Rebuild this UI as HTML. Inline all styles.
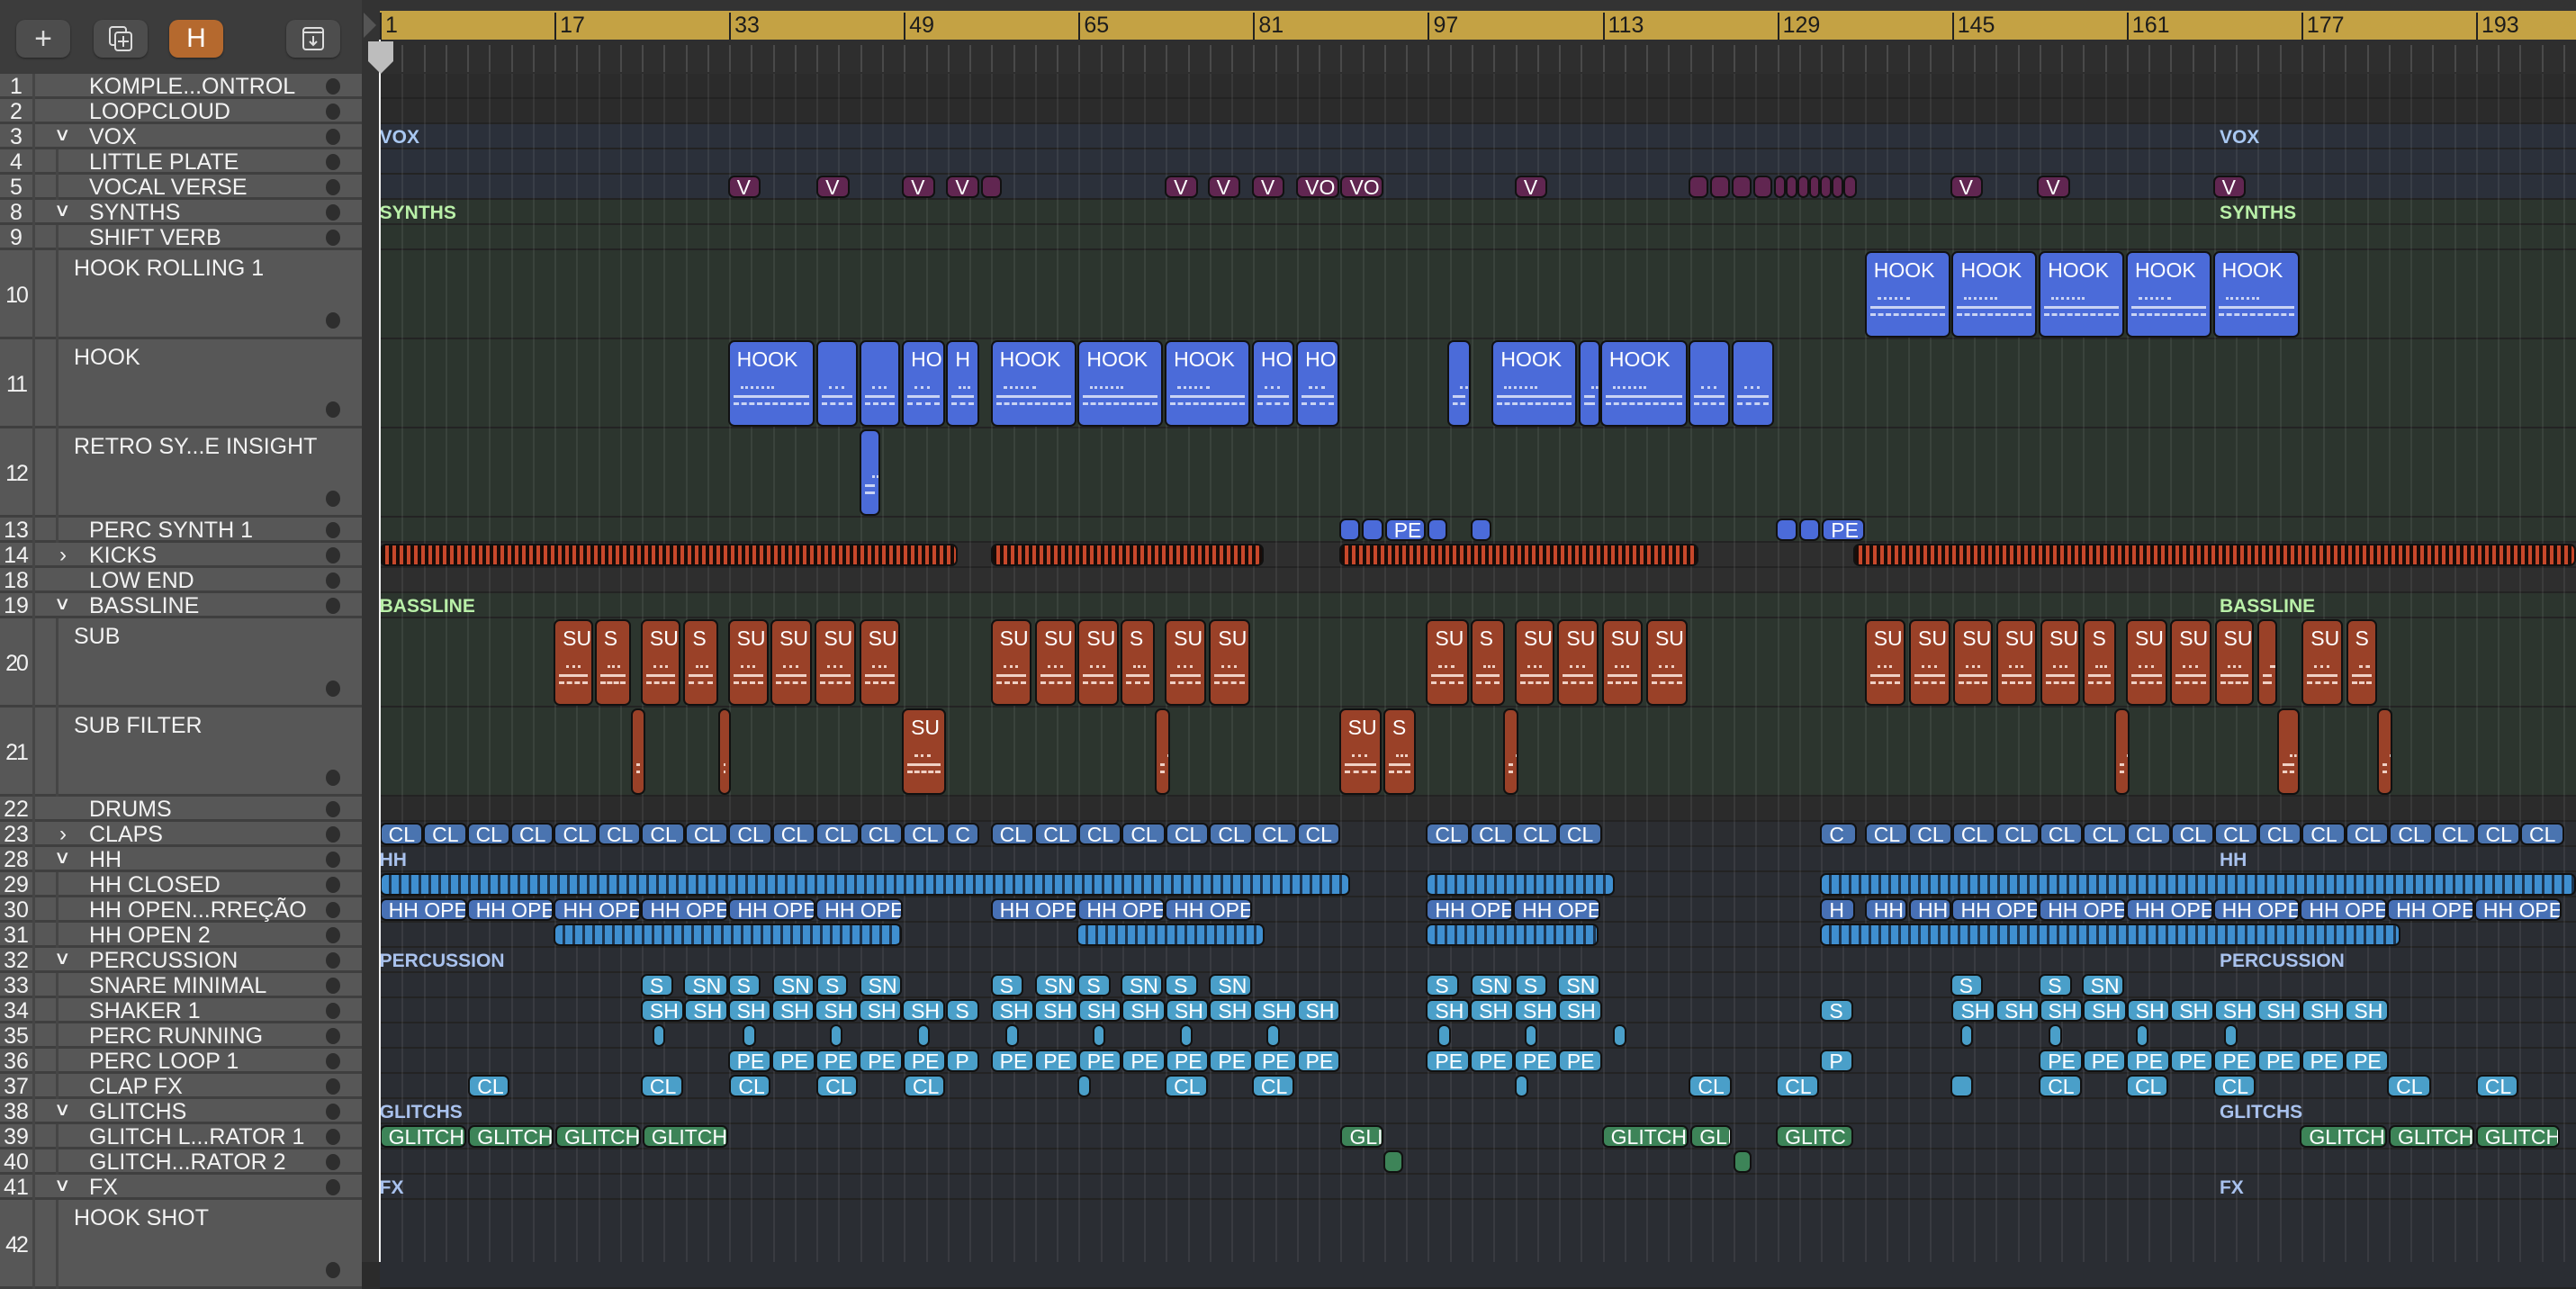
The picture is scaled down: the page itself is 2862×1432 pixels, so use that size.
<!DOCTYPE html>
<html><head><meta charset="utf-8">
<style>
*{margin:0;padding:0;box-sizing:border-box}
body{width:2862px;height:1402px;overflow:hidden;background:#2b2b2b;font-family:"Liberation Sans","DejaVu Sans",sans-serif;position:relative}
.a{position:absolute}
.btn{position:absolute;top:22px;width:60px;height:42px;background:#4d4d4d;border-radius:10px;box-shadow:0 1px 2px #222;color:#ddd;font-size:34px;text-align:center;line-height:42px}
.r{position:absolute;border:2px solid #111;border-radius:7px;color:#fff;font-size:23px;overflow:hidden;white-space:nowrap;padding-left:8px}
.nm{position:absolute;color:#f2f2f2;font-size:25px;white-space:nowrap}
.num{position:absolute;left:0;width:36px;color:#f2f2f2;font-size:25px;text-align:center}
.dot{position:absolute;left:362px;width:16px;height:18px;border-radius:50%;background:#2e2e2e}
.gl{position:absolute;font-size:21px;font-weight:bold}
</style></head><body>
<div class="a" style="left:0;top:0;width:402px;height:82px;background:#3c3c3c"></div>
<div class="btn" style="left:18px">+</div>
<div class="btn" style="left:104px"><svg width="34" height="34" viewBox="0 0 34 34" style="margin-top:4px"><rect x="5" y="4" width="18" height="20" rx="3" fill="none" stroke="#ddd" stroke-width="2"/><rect x="11" y="10" width="18" height="20" rx="3" fill="#4d4d4d" stroke="#ddd" stroke-width="2"/><path d="M20 14v12M14 20h12" stroke="#ddd" stroke-width="2"/></svg></div>
<div class="btn" style="left:188px;background:#b5692e;color:#fff;font-size:30px">H</div>
<div class="btn" style="left:318px"><svg width="34" height="34" viewBox="0 0 34 34" style="margin-top:4px"><rect x="6" y="5" width="22" height="24" rx="3" fill="none" stroke="#ddd" stroke-width="2"/><path d="M6 10h22M17 14v10M13 20l4 4 4-4" stroke="#ddd" stroke-width="2" fill="none"/></svg></div>
<div class="a" style="left:402px;top:0;width:20px;height:1402px;background:#333"></div>
<div class="a" style="left:402px;top:0;width:2460px;height:12px;background:#333"></div>
<div class="a" style="left:422px;top:12px;width:2440px;height:32px;background:#c4a244"></div>
<div class="a" style="left:422px;top:44px;width:2440px;height:38px;background:#2e2e2e"></div>
<div class="a" style="left:404px;top:14px;width:0;height:0;border-top:14px solid transparent;border-bottom:14px solid transparent;border-left:14px solid #555"></div>
<div id="root"></div>
<script>
(function(){
const S=1.8253,root=document.getElementById('root');
function el(h){root.insertAdjacentHTML('beforeend',h)}
const BX=b=>422+(b-1)*12.13;
for(let b=1;b<=201;b+=16){const x=BX(b);el(`<div class="a" style="left:${x}px;top:14px;width:2px;height:30px;background:#222"></div><div class="a" style="left:${x+6}px;top:14px;font-size:25px;color:#1c1c1c">${b}</div>`)}
for(let b=1;b<=201;b+=2){el(`<div class="a" style="left:${BX(b)}px;top:50px;width:2px;height:30px;background:#4a4a4a"></div>`)}
const rows=[[1,'KOMPLE...ONTROL',0,0],[2,'LOOPCLOUD',0,0],[3,'VOX',0,1],[4,'LITTLE PLATE',1,0],[5,'VOCAL VERSE',1,0],[8,'SYNTHS',0,1],[9,'SHIFT VERB',1,0],[10,'HOOK ROLLING 1',2,0],[11,'HOOK',2,0],[12,'RETRO SY...E INSIGHT',2,0],[13,'PERC SYNTH 1',1,0],[14,'KICKS',0,2],[18,'LOW END',0,0],[19,'BASSLINE',0,1],[20,'SUB',2,0],[21,'SUB FILTER',2,0],[22,'DRUMS',0,0],[23,'CLAPS',0,2],[28,'HH',0,1],[29,'HH CLOSED',1,0],[30,'HH OPEN...RREÇÃO',1,0],[31,'HH OPEN 2',1,0],[32,'PERCUSSION',0,1],[33,'SNARE MINIMAL',1,0],[34,'SHAKER 1',1,0],[35,'PERC RUNNING',1,0],[36,'PERC LOOP 1',1,0],[37,'CLAP FX',1,0],[38,'GLITCHS',0,1],[39,'GLITCH L...RATOR 1',1,0],[40,'GLITCH...RATOR 2',1,0],[41,'FX',0,1],[42,'HOOK SHOT',2,0]];
const bgs={1:'#2b2b2b',2:'#2b2b2b',3:'#2b303a',4:'#2b303a',5:'#2b303a',8:'#2c352e',9:'#2c352e',10:'#2c352e',11:'#2c352e',12:'#2c352e',13:'#2c352e',14:'#2e2e2e',18:'#2e2e2e',19:'#2c352e',20:'#2c352e',21:'#2c352e',22:'#2b2b2b',23:'#2b2d31'};
const TP={};let y=82;
rows.forEach(([n,name,k,g])=>{const h=k==2?99:28;TP[n]=[y,h];
 el(`<div class="a" style="left:0;top:${y}px;width:402px;height:${h}px;background:#575757;border-bottom:3px solid #3f3f3f"></div>`);
 el(`<div class="a" style="left:36px;top:${y}px;width:3px;height:${h}px;background:#454545"></div>`);
 if(k)el(`<div class="a" style="left:62px;top:${y}px;width:3px;height:${h}px;background:#454545"></div>`);
 el(`<div class="num" style="top:${k==2?y+h/2-14:y}px;line-height:28px;${k==2?'letter-spacing:-2px':''}">${n}</div>`);
 el(`<div class="nm" style="left:${k==2?82:99}px;top:${k==2?y+6:y}px;line-height:28px">${name}</div>`);
 if(g==1)el(`<div class="nm" style="left:62px;top:${y-2}px;font-size:20px;line-height:28px;transform:scaleX(1.3)">∨</div>`);
 if(g==2)el(`<div class="nm" style="left:66px;top:${y}px;font-size:24px;line-height:28px">›</div>`);
 el(`<div class="dot" style="top:${k==2?y+h-30:y+5}px"></div>`);
 el(`<div class="a" style="left:422px;top:${y}px;width:2440px;height:${h}px;background:${bgs[n]||'#2a2d33'};border-bottom:2px solid #232323"></div>`);
 y+=h;});
for(let b=3;b<=201;b+=2){el(`<div class="a" style="left:${BX(b)}px;top:82px;width:2px;height:1320px;background:rgba(255,255,255,0.07)"></div>`)}
const gls=[[3,'VOX','#a9c8f2'],[8,'SYNTHS','#b9f0a8'],[19,'BASSLINE','#b9f0a8'],[28,'HH','#a9c2ee'],[32,'PERCUSSION','#a9c2ee'],[38,'GLITCHS','#a9c2ee'],[41,'FX','#a9c2ee']];
gls.forEach(([n,t,c])=>{[231,1351].forEach(d=>el(`<div class="gl" style="left:${d*S}px;top:${TP[n][0]+3}px;color:${c}">${t}</div>`))});
function R(n,list,col,opt){opt=opt||{};const ty=TP[n][0],h=TP[n][1];list.forEach(([a,b,t])=>{const x=a*S,w=(b-a)*S;const tall=h>50;
 let inner=t||'';let st=`left:${x}px;top:${ty+1}px;width:${w}px;height:${h-3}px;background:${opt.bg||col};`;
 if(tall){st+=`line-height:22px;padding-top:8px;`;const dc=opt.dash||'rgba(255,255,255,.7)';inner+=`<div style="position:absolute;left:4px;right:4px;bottom:22px;height:3px;border-top:3px dashed ${dc}"></div><div style="position:absolute;left:4px;right:4px;bottom:30px;height:3px;background:${dc}"></div><div style="position:absolute;left:12px;width:40%;bottom:40px;height:3px;border-top:3px dotted ${dc}"></div>`}
 else st+=`line-height:23px;`;
 el(`<div class="r" style="${st}">${inner}</div>`)})}
const V='#612651',HB='#4b6bd9',SU='#9a4128',CL='#4a74b0',HO='#4770b5',PC='#4a9fc9',GT='#3d8458';
function seq(a,b,step,t){const o=[];for(let x=a;x<b-2;x+=step){const e=Math.min(x+step,b);o.push([x,e,t])}return o}
R(5,[[443,463,'V'],[497,517,'V'],[549,569,'V'],[576,596,'V'],[597,610],[709,729,'V'],[735,755,'V'],[762,782,'V'],[789,815,'VO'],[816,842,'VO'],[922,942,'V'],[1028,1040],[1041,1053],[1054,1066],[1067,1079],[1080,1087],[1087,1094],[1094,1101],[1101,1108],[1108,1115],[1115,1122],[1122,1130],[1187,1207,'V'],[1240,1260,'V'],[1347,1367,'V']],V);
R(10,[[1135,1187,'HOOK'],[1188,1240,'HOOK'],[1241,1293,'HOOK'],[1294,1346,'HOOK'],[1347,1400,'HOOK']],HB);
R(11,[[443,496,'HOOK'],[497,522],[523,548],[549,575,'HO'],[576,596,'H'],[603,655,'HOOK'],[656,708,'HOOK'],[709,761,'HOOK'],[762,788,'HO'],[789,815,'HO'],[881,895],[908,960,'HOOK'],[961,974],[974,1027,'HOOK'],[1028,1053],[1054,1080]],HB);
R(12,[[523,536]],HB);
R(13,[[815,828],[829,842],[843,868,'PE'],[869,881],[895,908],[1081,1094],[1095,1108],[1109,1135,'PE']],HB);
R(14,[[231,583],[603,769],[815,1034],[1128,1568]],'',{bg:'repeating-linear-gradient(90deg,#1a0c08 0 4px,#c8482b 4px 8px)'});
R(20,[[337,361,'SU'],[362,384,'S'],[390,414,'SU'],[416,437,'S'],[443,468,'SU'],[469,494,'SU'],[496,521,'SU'],[523,548,'SU'],[603,628,'SU'],[630,655,'SU'],[656,681,'SU'],[682,703,'S'],[709,734,'SU'],[736,761,'SU'],[868,894,'SU'],[895,916,'S'],[922,946,'SU'],[948,973,'SU'],[975,1000,'SU'],[1002,1027,'SU'],[1135,1160,'SU'],[1162,1187,'SU'],[1189,1213,'SU'],[1215,1240,'SU'],[1242,1266,'SU'],[1268,1288,'S'],[1294,1319,'SU'],[1321,1346,'SU'],[1348,1372,'SU'],[1374,1386],[1401,1426,'SU'],[1428,1447,'S']],SU,{dash:'#f0d0c4'});
R(21,[[384,393],[437,445],[549,576,'SU'],[703,712],[815,841,'SU'],[842,862,'S'],[915,924],[1287,1296],[1386,1400],[1447,1456]],SU,{dash:'#f0d0c4'});
R(23,[...seq(231,576,26.55,'CL'),[576,596,'C'],...seq(603,816,26.6,'CL'),...seq(868,975,26.75,'CL'),[1108,1130,'C'],...seq(1135,1561,26.6,'CL')],CL);
R(29,[[231,822],[868,983],[1108,1568]],'',{bg:'repeating-linear-gradient(90deg,#3f8fd0 0 8px,#1c3550 8px 11px)'});
R(30,[...seq(231,550,53.1,'HH OPE'),...seq(603,762,53,'HH OPE'),...seq(868,974,53,'HH OPE'),[1108,1129,'H'],[1135,1161,'HH'],[1162,1188,'HH'],...seq(1188,1559,53,'HH OPE')],HO);
R(31,[[337,549],[655,770],[868,973],[1108,1461]],'',{bg:'repeating-linear-gradient(90deg,#3f8fd0 0 8px,#1c3550 8px 11px)'});
R(33,[[390,410,'S'],[416,443,'SN'],[443,463,'S'],[470,496,'SN'],[497,516,'S'],[523,549,'SN'],[603,623,'S'],[630,655,'SN'],[656,676,'S'],[682,708,'SN'],[709,729,'S'],[736,762,'SN'],[868,888,'S'],[895,921,'SN'],[922,942,'S'],[948,974,'SN'],[1187,1207,'S'],[1241,1261,'S'],[1267,1293,'SN']],PC);
R(34,[...seq(390,576,26.5,'SH'),[576,596,'S'],...seq(603,816,26.6,'SH'),...seq(868,975,26.75,'SH'),[1108,1128,'S'],...seq(1188,1454,26.6,'SH')],PC);
R(35,[397,452,505,558,612,665,718,771,875,928,982,1193,1247,1300,1354].map(x=>[x,x+8]),PC);
R(36,[...seq(443,576,26.6,'PE'),[576,596,'P'],...seq(603,816,26.6,'PE'),...seq(868,975,26.75,'PE'),[1108,1128,'P'],...seq(1241,1454,26.6,'PE')],PC);
R(37,[[285,310,'CL'],[390,416,'CL'],[444,469,'CL'],[497,522,'CL'],[550,575,'CL'],[656,664],[709,735,'CL'],[762,788,'CL'],[922,930],[1028,1054,'CL'],[1081,1107,'CL'],[1187,1201],[1241,1267,'CL'],[1294,1320,'CL'],[1347,1373,'CL'],[1453,1480,'CL'],[1507,1533,'CL']],PC);
R(39,[[231,284,'GLITCH'],[285,337,'GLITCH'],[338,390,'GLITCH'],[391,443,'GLITCH'],[816,842,'GLI'],[975,1028,'GLITCH'],[1029,1054,'GLI'],[1081,1128,'GLITC'],[1400,1453,'GLITCH'],[1454,1506,'GLITCH'],[1507,1558,'GLITCH']],GT);
R(40,[[842,854],[1055,1066]],GT);
el(`<div class="a" style="left:421px;top:44px;width:2px;height:1358px;background:#f2f2f2"></div>`);
el(`<svg class="a" style="left:406px;top:44px" width="34" height="40"><path d="M3 2h28v22l-14 14-14-14z" fill="#bdbdbd"/></svg>`);
})();
</script>
</body></html>
